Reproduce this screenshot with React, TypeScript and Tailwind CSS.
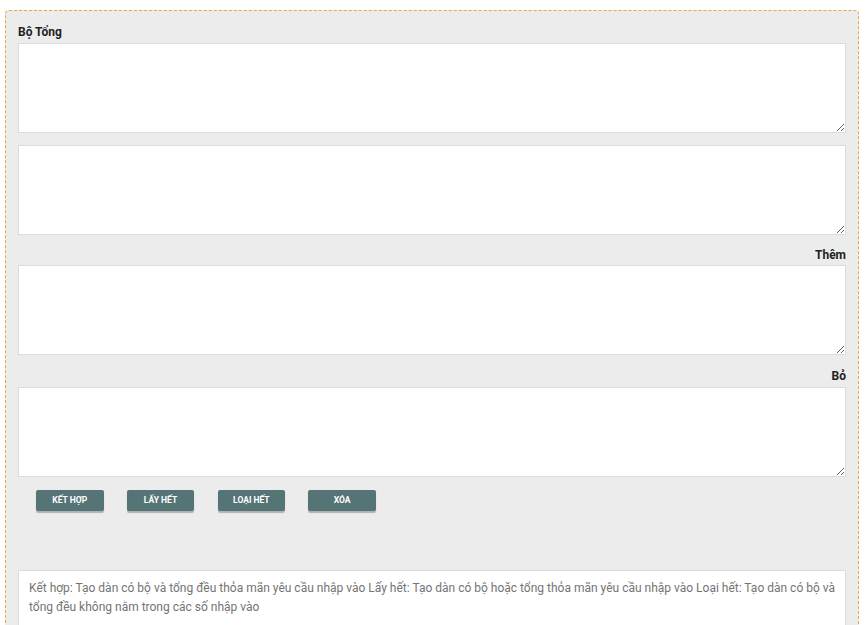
import React from "react";

const ta =
  "block w-full h-[90px] bg-white border border-[#dcdcdc] resize-y outline-none p-2 text-[13px]";

const Btn = ({ label }: { label: string }) => (
  <button className="h-[21px] w-[67.5px] rounded-[2px] bg-[#557476] text-white text-[8.5px] font-bold uppercase shadow-[0_2px_1px_rgba(0,0,0,0.25)] leading-none">
    {label}
  </button>
);

export default function App() {
  return (
    <div className="bg-white min-h-screen pt-[10px] pl-[5px]" style={{ fontFamily: "Roboto, 'Noto Sans', sans-serif" }}>
      <div className="w-[854px] rounded-[4px] border border-dashed border-[#e8a93e] bg-[#ececec] px-[12px] pt-[12px] pb-[40px]">
        <div className="text-[12px] font-bold text-[#222] h-[18px] leading-[18px] mb-[2px]">Bộ Tổng</div>
        <textarea className={ta} />
        <textarea className={ta + " mt-[12px]"} />
        <div className="text-[12px] font-bold text-[#222] h-[18px] leading-[18px] text-right mt-[11px] mb-[1px]">Thêm</div>
        <textarea className={ta} />
        <div className="text-[12px] font-bold text-[#222] h-[18px] leading-[18px] text-right mt-[12px] mb-[2px]">Bỏ</div>
        <textarea className={ta} />
        <div className="flex gap-[23.3px] pl-[18px] mt-[13px]">
          <Btn label="Kết hợp" />
          <Btn label="Lấy hết" />
          <Btn label="Loại hết" />
          <Btn label="Xóa" />
        </div>
        <div className="mt-[59px] bg-white border border-[#dcdcdc] px-[10px] pt-[8px] pb-[20px] text-[12px] leading-[19px] text-[#747474]">
          Kết hợp: Tạo dàn có bộ và tổng đều thỏa mãn yêu cầu nhập vào Lấy hết: Tạo dàn có bộ hoặc tổng thỏa mãn yêu cầu nhập vào Loại hết: Tạo dàn có bộ và tổng đều không nằm trong các số nhập vào
        </div>
      </div>
    </div>
  );
}
